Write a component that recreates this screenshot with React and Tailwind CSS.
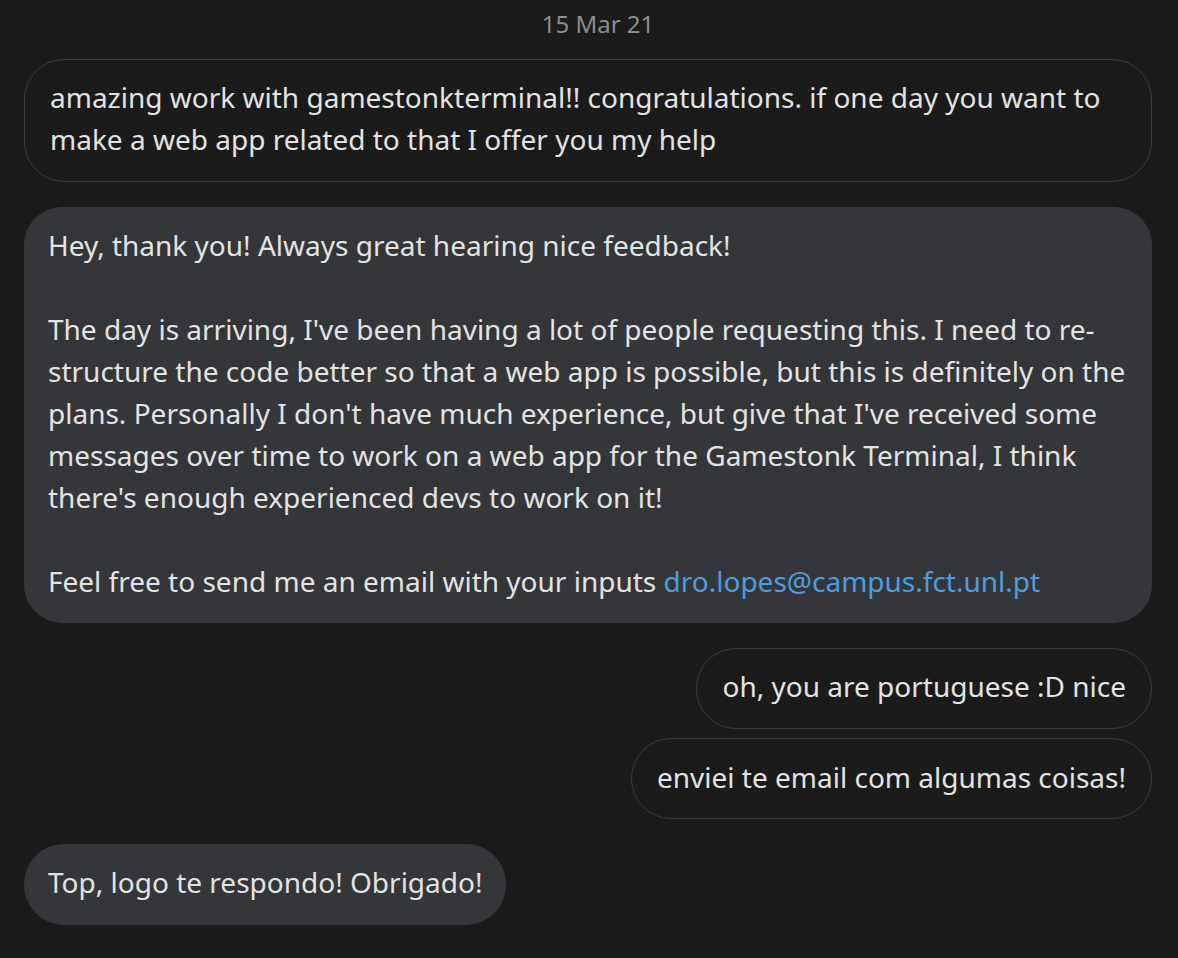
export default function App() {
  const font = { fontFamily: '"Noto Sans", "Open Sans", sans-serif' };
  return (
    <div className="flex h-[958px] w-[1178px] overflow-hidden bg-[#1b1b1c] text-[#e3e3e3]" style={font}>
      <div className="flex flex-1 flex-col pl-[24px] pr-[16px]">
        <div className="flex h-[58.5px] items-start justify-center pl-[20px] pt-[7px] text-[24px] leading-[34px] text-[#8c8c8e]">
          15 Mar 21
        </div>
        <div className="flex flex-col text-[28px] leading-[42px]">
          <div className="rounded-[40px] border border-[#3c3c3e] px-[25px] pt-[16.5px] pb-[20.5px]">
            amazing work with gamestonkterminal!! congratulations. if one day you want to make a web app related to that I offer you my help
          </div>
          <div className="mt-[25px] rounded-[38px] border border-transparent bg-[#353639] px-[23px] pt-[16.5px] pb-[20px]">
            <p>Hey, thank you! Always great hearing nice feedback!</p>
            <p className="mt-[42px]">
              The day is arriving, I've been having a lot of people requesting this. I need to re-structure the code better so that a web app is possible, but this is definitely on the plans. Personally I don't have much experience, but give that I've received some messages over time to work on a web app for the Gamestonk Terminal, I think there's enough experienced devs to work on it!
            </p>
            <p className="mt-[42px]">
              Feel free to send me an email with your inputs{" "}
              <span className="text-[#4b9fe1]">dro.lopes@campus.fct.unl.pt</span>
            </p>
          </div>
          <div className="mt-[24.5px] flex justify-end">
            <div className="rounded-[40px] border border-[#3c3c3e] px-[25px] pt-[16.5px] pb-[20.5px]">
              oh, you are portuguese :D nice
            </div>
          </div>
          <div className="mt-[9.5px] flex justify-end">
            <div className="rounded-[40px] border border-[#3c3c3e] px-[25px] pt-[16.5px] pb-[20.5px]">
              enviei te email com algumas coisas!
            </div>
          </div>
          <div className="mt-[24.5px] flex justify-start">
            <div className="rounded-[40px] border border-transparent bg-[#353639] px-[23px] pt-[16.5px] pb-[20.5px]">
              Top, logo te respondo! Obrigado!
            </div>
          </div>
        </div>
      </div>
      <div className="w-[10px] bg-[#18181a]" />
    </div>
  );
}
